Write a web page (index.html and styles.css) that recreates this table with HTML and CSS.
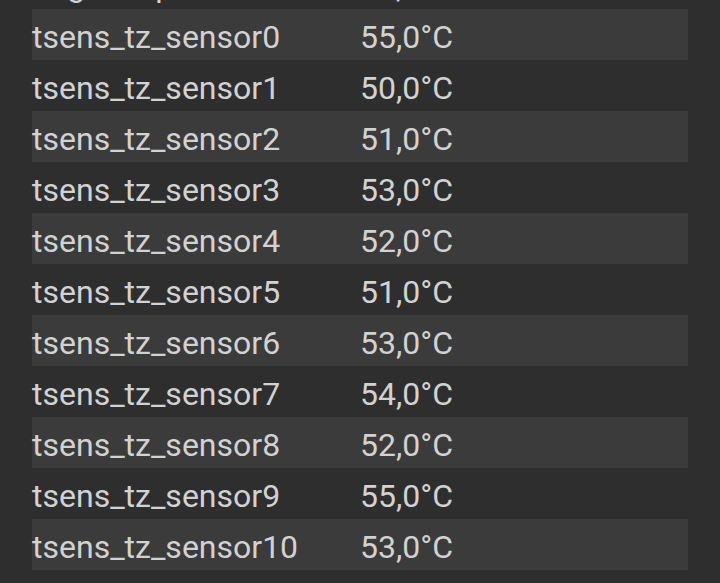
FILE: index.html
```html
<!DOCTYPE html>
<html>
<head>
<meta charset="utf-8">
<link rel="stylesheet" href="styles.css">
</head>
<body>
<div class="table">
  <div class="row"><span class="name">bag_temp</span><span class="value">41,0°C</span></div>
  <div class="row"><span class="name">tsens_tz_sensor0</span><span class="value">55,0°C</span></div>
  <div class="row"><span class="name">tsens_tz_sensor1</span><span class="value">50,0°C</span></div>
  <div class="row"><span class="name">tsens_tz_sensor2</span><span class="value">51,0°C</span></div>
  <div class="row"><span class="name">tsens_tz_sensor3</span><span class="value">53,0°C</span></div>
  <div class="row"><span class="name">tsens_tz_sensor4</span><span class="value">52,0°C</span></div>
  <div class="row"><span class="name">tsens_tz_sensor5</span><span class="value">51,0°C</span></div>
  <div class="row"><span class="name">tsens_tz_sensor6</span><span class="value">53,0°C</span></div>
  <div class="row"><span class="name">tsens_tz_sensor7</span><span class="value">54,0°C</span></div>
  <div class="row"><span class="name">tsens_tz_sensor8</span><span class="value">52,0°C</span></div>
  <div class="row"><span class="name">tsens_tz_sensor9</span><span class="value">55,0°C</span></div>
  <div class="row"><span class="name">tsens_tz_sensor10</span><span class="value">53,0°C</span></div>
</div>
</body>
</html>
```
FILE: styles.css
```css
html, body {
  margin: 0;
  padding: 0;
  background: #2e2e2e;
  height: 100%;
  overflow: hidden;
}
.table {
  margin: -42px 32px 0 32px;
  width: 656px;
  font-family: Roboto, "Noto Sans", sans-serif;
  font-size: 32px;
  color: #d2d2d2;
}
.row {
  display: flex;
  height: 51px;
  align-items: center;
  padding-top: 4px;
  box-sizing: border-box;
}
.row:nth-child(even) {
  background: #3b3b3b;
}
.name {
  width: 328px;
}
```
